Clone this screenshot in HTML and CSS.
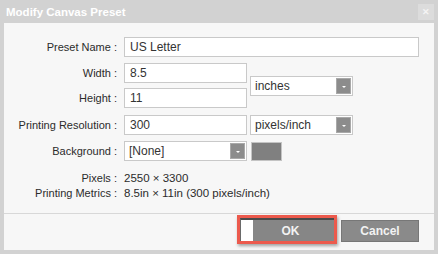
FILE: index.html
```html
<!DOCTYPE html>
<html lang="en">
<head>
    <meta charset="UTF-8">
    <meta name="viewport" content="width=device-width, initial-scale=1.0">
    <title>Modify Canvas Preset</title>
    <link rel="stylesheet" href="styles.css">
</head>
<body>
    <div class="dialog">
        <!-- Title bar -->
        <div class="titlebar">
            <span class="title">Modify Canvas Preset</span>
            <span class="close">&#x2715;</span>
        </div>

        <div class="content">
            <div class="form">
                <label class="lbl">Preset Name :</label>
                <input class="field span-wide" type="text" value="US Letter">

                <label class="lbl">Width :</label>
                <input class="field" type="text" value="8.5">
                <div class="select units">
                    <span>inches</span>
                    <span class="arrow"></span>
                </div>

                <label class="lbl row-tight">Height :</label>
                <input class="field row-tight" type="text" value="11">

                <label class="lbl">Printing Resolution :</label>
                <input class="field" type="text" value="300">
                <div class="select col-3">
                    <span>pixels/inch</span>
                    <span class="arrow"></span>
                </div>

                <label class="lbl">Background :</label>
                <div class="select col-2">
                    <span>[None]</span>
                    <span class="arrow"></span>
                </div>
                <div class="swatch"></div>
            </div>

            <div class="info">
                <span class="lbl">Pixels :</span>
                <span>2550 &times; 3300</span>
                <span class="lbl">Printing Metrics :</span>
                <span>8.5in &times; 11in (300 pixels/inch)</span>
            </div>

            <div class="footer">
                <div class="highlight">
                    <button class="btn btn-ok"><span class="ok-strip"></span><span class="ok-text">OK</span></button>
                </div>
                <button class="btn btn-cancel">Cancel</button>
            </div>
        </div>
    </div>
</body>
</html>
```

FILE: styles.css
```css
/* Page */
body {
    margin: 0;
    font-family: "Liberation Sans", Arial, sans-serif;
    font-size: 11px;
    color: #2b2b2b;
    background: #cfcfcf;
}

/* Dialog window */
.dialog {
    width: 438px;
    height: 254px;
    box-sizing: border-box;
    background: #d2d2d2;
    padding: 0 4px 4px 4px;
    display: flex;
    flex-direction: column;
}

.titlebar {
    height: 23px;
    display: flex;
    align-items: center;
    justify-content: space-between;
}

.title {
    color: #fff;
    font-weight: bold;
    font-size: 11.5px;
    padding-left: 2px;
}

.close {
    width: 16px;
    height: 16px;
    margin-top: 1px;
    background: #dcdcdc;
    color: #f4f4f4;
    font-size: 9px;
    font-weight: bold;
    display: flex;
    align-items: center;
    justify-content: center;
}

.content {
    flex: 1;
    background: #f7f7f7;
    display: flex;
    flex-direction: column;
}

/* Form grid */
.form {
    display: grid;
    grid-template-columns: 117px 123px 103px 1fr;
    grid-template-rows: 20px 20px 20px 20px 20px;
    column-gap: 3px;
    row-gap: 6px;
    padding: 14px 15px 0 0;
    align-items: center;
}

.lbl {
    grid-column: 1;
    text-align: right;
    padding-right: 4px;
}

.row-tight {
    margin-top: -2px;
}

.field {
    grid-column: 2;
    box-sizing: border-box;
    height: 20px;
    border: 1px solid #c9c9c9;
    background: #fff;
    font: inherit;
    font-size: 12px;
    color: #333;
    padding: 0 5px;
    width: 100%;
}

.span-wide {
    grid-column: 2 / 5;
}

.select {
    box-sizing: border-box;
    height: 20px;
    border: 1px solid #c9c9c9;
    background: #fff;
    font-size: 12px;
    color: #333;
    display: flex;
    align-items: center;
    justify-content: space-between;
    padding: 0 1px 0 4px;
}

.col-2 {
    grid-column: 2;
}

.col-3 {
    grid-column: 3;
}

.units {
    grid-column: 3;
    grid-row: 2 / 4;
}

.arrow {
    width: 15px;
    height: 16px;
    background: #8c8c8c;
    border: 1px solid #a9a9a9;
    box-sizing: border-box;
    position: relative;
}

.arrow::after {
    content: "";
    position: absolute;
    left: 5px;
    top: 7px;
    border-left: 2px solid transparent;
    border-right: 2px solid transparent;
    border-top: 2px solid #fff;
}

.swatch {
    grid-column: 3;
    width: 31px;
    height: 19px;
    box-sizing: border-box;
    background: #808080;
    border: 1px solid #c4c4c4;
    margin-left: 1px;
}

/* Computed info */
.info {
    display: grid;
    grid-template-columns: 117px 1fr;
    column-gap: 3px;
    line-height: 15px;
    margin-top: 10px;
    font-size: 11px;
}

.info span:not(.lbl) {
    font-size: 11.5px;
}

/* Footer with buttons */
.footer {
    margin-top: auto;
    border-top: 1px solid #d8d8d8;
    height: 37px;
    box-sizing: border-box;
    display: flex;
    align-items: flex-start;
    justify-content: flex-end;
    padding: 1px 15px 0 0;
    gap: 4px;
}

.highlight {
    border: 3px solid #ec5a4d;
    box-shadow: 1px 2px 3px rgba(0, 0, 0, 0.35);
    background: #fff;
    display: flex;
}

.btn {
    font-family: inherit;
    font-weight: bold;
    font-size: 12px;
    color: #f2f2f2;
    height: 23px;
    padding: 0;
    cursor: pointer;
}

.btn-ok {
    width: 94px;
    display: flex;
    border: none;
    border-top: 2px solid #4a4a4a;
    border-left: 1px solid #6a6a6a;
    background: #868686;
}

.ok-strip {
    width: 12px;
    background: #fff;
}

.ok-text {
    flex: 1;
    display: flex;
    align-items: center;
    justify-content: center;
    padding-right: 6px;
}

.btn-cancel {
    margin-top: 5px;
    height: 22px;
    width: 78px;
    background: #8a8a8a;
    border: 1px solid #777;
}
```
